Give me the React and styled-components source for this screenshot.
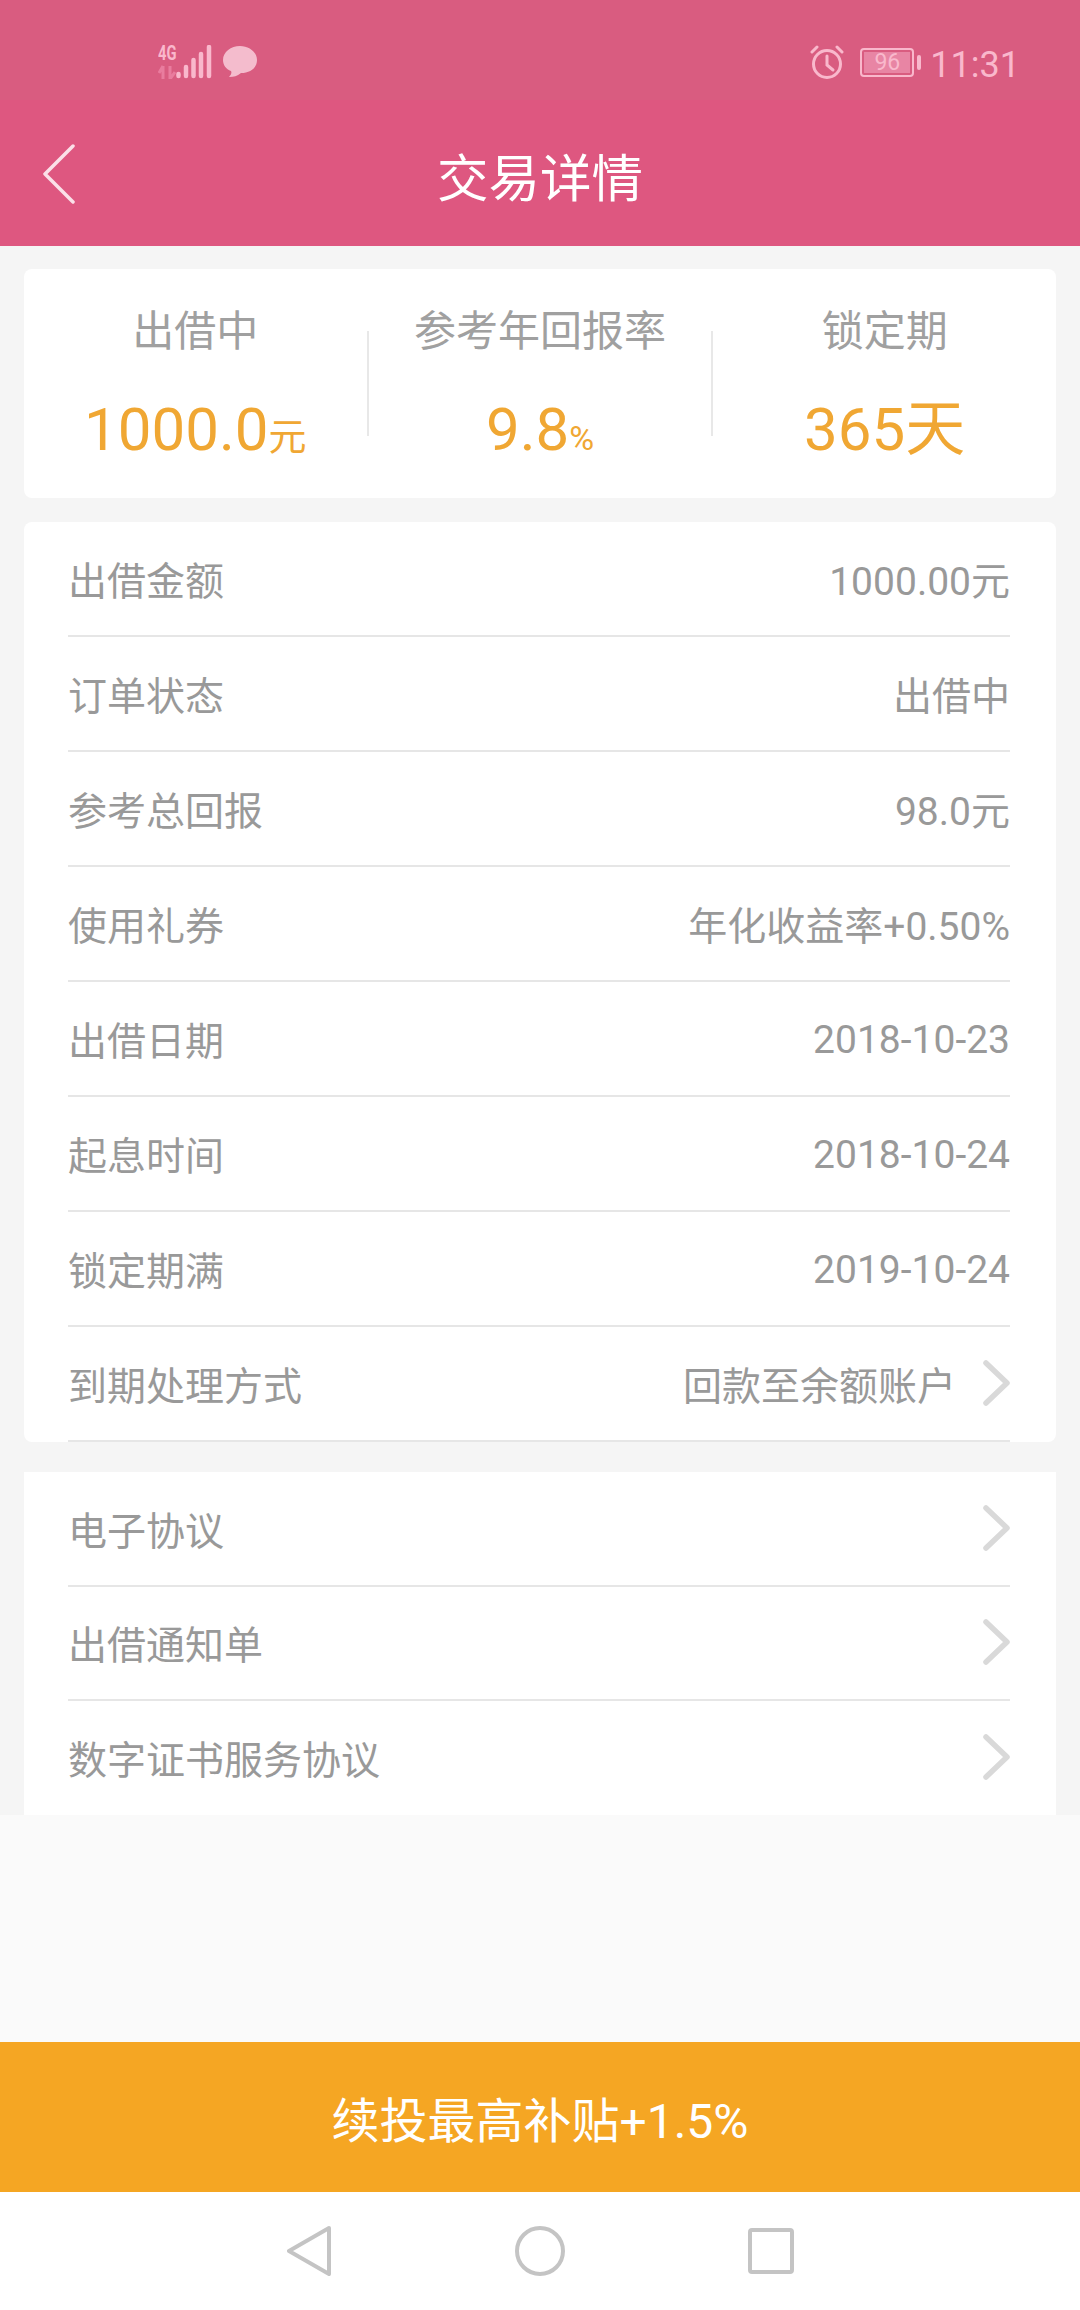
import React from 'react';
import styled, { createGlobalStyle } from 'styled-components';

const Global = createGlobalStyle`
html, body { margin: 0; padding: 0; background: #f5f5f5; }
* { box-sizing: border-box; }
body { font-family: Roboto, "Noto Sans CJK SC", sans-serif; }
`;

const Page = styled.div`
width: 1080px;
height: 2310px;
display: flex;
flex-direction: column;
background: #f5f5f5;
overflow: hidden;
`;

const StatusBar = styled.div`
height: 100px;
padding: 45px 60px 0 158px;
background: #d95c80;
display: flex;
align-items: flex-start;
color: #f9b8cc;
`;

const StatusLeft = styled.div`
display: flex;
flex: 1;
`;

const NetStack = styled.div`
width: 18px;
display: flex;
flex-direction: column;
`;

const NetLabel = styled.div`
height: 20px;
font-size: 21px;
font-weight: 700;
line-height: 16px;
white-space: nowrap;
transform: scaleX(0.7);
transform-origin: left top;
`;

const SignalBars = styled.svg`
display: block;
margin-right: 11px;
`;

const StatusRight = styled.div`
display: flex;
align-items: center;
height: 34px;
`;

const Battery = styled.div`
width: 54px;
height: 29px;
margin-left: 16px;
border: 2px solid #f9b8cc;
border-radius: 4px;
padding: 2px;
position: relative;
&::after {
  content: "";
  position: absolute;
  right: -9px;
  top: 5px;
  width: 4px;
  height: 15px;
  border-radius: 2px;
  background: #f9b8cc;
}
`;

const BatteryFill = styled.div`
height: 100%;
background: #e885a4;
font-size: 23px;
line-height: 21px;
text-align: center;
`;

const Clock = styled.div`
margin: 6px 0 0 16px;
font-size: 36px;
line-height: 34px;
`;

const NavBar = styled.div`
height: 146px;
padding: 2px 43px 0;
background: #de5780;
display: grid;
grid-template-columns: 1fr auto 1fr;
align-items: center;
`;

const Title = styled.h1`
margin: 0;
font-size: 51.5px;
font-weight: 400;
color: #fff;
`;

const Main = styled.div`
padding: 23px 24px 0;
display: flex;
flex-direction: column;
`;

const StatCard = styled.div`
height: 229px;
background: #fff;
border-radius: 8px;
display: flex;
align-items: center;
`;

const Stat = styled.div`
flex: 1;
height: 100%;
display: flex;
flex-direction: column;
align-items: center;
`;

const StatLabel = styled.div`
height: 61px;
margin-top: 33px;
line-height: 60px;
font-size: 42px;
color: #a0a0a0;
`;

const StatValue = styled.div`
margin-top: 32px;
font-size: 60px;
line-height: 70px;
color: #f0a733;
`;

const StatUnit = styled.span`
font-size: ${p => p.$size}px;
`;

const StatDivider = styled.div`
width: 2px;
height: 105px;
background: #e8e8e8;
`;

const Card = styled.div`
margin-top: ${p => p.$top}px;
padding: 0 46px 0 44px;
background: #fff;
border-radius: ${p => p.$radius};
`;

const Row = styled.div`
height: ${p => p.$height || 115}px;
padding-bottom: 2px;
display: flex;
align-items: center;
justify-content: space-between;
border-bottom: ${p => (p.$plain ? 'none' : '2px solid #e6e6e6')};
font-size: 39px;
color: #999;
`;

const DateValue = styled.span`
padding-top: 4px;
`;

const RowValue = styled.div`
display: flex;
align-items: center;
gap: 27px;
`;

const Chevron = styled.svg`
width: 27px;
height: 46px;
display: block;
`;

const Filler = styled.div`
flex: 1;
background: #fafafa;
`;

const ActionButton = styled.div`
height: 150px;
background: #f5a623;
color: #fff;
font-size: 48px;
display: flex;
align-items: center;
justify-content: center;
`;

const SoftKeys = styled.div`
height: 118px;
background: #fff;
display: grid;
grid-template-columns: 45px 50px 46px;
justify-content: center;
column-gap: 183px;
align-items: center;
`;

const details = [
  ['出借金额', '1000.00元'],
  ['订单状态', '出借中'],
  ['参考总回报', '98.0元'],
  ['使用礼券', '年化收益率+0.50%'],
];

const dates = [
  ['出借日期', '2018-10-23'],
  ['起息时间', '2018-10-24'],
  ['锁定期满', '2019-10-24'],
];

const links = ['电子协议', '出借通知单', '数字证书服务协议'];

const RowChevron = () => (
  <Chevron viewBox="0 0 27 46">
    <path d="M3 3 L24 23 L3 43" fill="none" stroke="#d9d9d9" strokeWidth="5.5" strokeLinecap="round" strokeLinejoin="round" />
  </Chevron>
);

const BubbleIcon = () => (
  <svg width="34" height="33" viewBox="0 0 34 33">
    <path d="M17 1 C26 1 34 7 34 15 C34 23 27 28 18 28 C14 31 11 32 6 32 C8 30 9 28 8 26 C3 24 0 20 0 15 C0 7 8 1 17 1 Z" fill="#f4bccd" />
  </svg>
);

const AlarmIcon = () => (
  <svg width="34" height="34" viewBox="0 0 34 34" fill="none" stroke="#f9b8cc" strokeWidth="3">
    <circle cx="17" cy="19" r="13.500" />
    <path d="M17 11 V20 L23 25" strokeLinecap="round" />
    <path d="M2 7 L7 2 M27 2 L32 7" strokeLinecap="round" />
  </svg>
);

const BackIcon = () => (
  <svg width="32" height="60" viewBox="0 0 32 60">
    <path d="M30 2 L2 30 L30 58" fill="none" stroke="#fbe0e8" strokeWidth="3.500" strokeLinecap="round" strokeLinejoin="round" />
  </svg>
);

export default function App() {
  return (
    <Page>
      <Global />
      <StatusBar>
        <StatusLeft>
          <NetStack>
            <NetLabel>4G</NetLabel>
            <svg width="18" height="14" viewBox="0 0 18 14">
              <path d="M5 1 V14 M5 1 L1 8 M12 1 V14 M12 14 L17 7" stroke="#e97c9e" strokeWidth="3" fill="none" />
            </svg>
          </NetStack>
          <SignalBars width="36" height="34" viewBox="0 0 36 34">
            <g stroke="#f9b8cc" strokeWidth="4.500" strokeLinecap="round">
              <path d="M2.500 29 V31" />
              <path d="M10 22 V31" />
              <path d="M17.500 15 V31" />
              <path d="M25 9 V31" />
              <path d="M33 2 V31" />
            </g>
          </SignalBars>
          <BubbleIcon />
        </StatusLeft>
        <StatusRight>
          <AlarmIcon />
          <Battery>
            <BatteryFill>96</BatteryFill>
          </Battery>
          <Clock>11:31</Clock>
        </StatusRight>
      </StatusBar>
      <NavBar>
        <BackIcon />
        <Title>交易详情</Title>
      </NavBar>
      <Main>
        <StatCard>
          <Stat>
            <StatLabel>出借中</StatLabel>
            <StatValue>1000.0<StatUnit $size={38}>元</StatUnit></StatValue>
          </Stat>
          <StatDivider />
          <Stat>
            <StatLabel>参考年回报率</StatLabel>
            <StatValue>9.8<StatUnit $size={34}>%</StatUnit></StatValue>
          </Stat>
          <StatDivider />
          <Stat>
            <StatLabel>锁定期</StatLabel>
            <StatValue>365天</StatValue>
          </Stat>
        </StatCard>
        <Card $top={24} $radius="8px">
          {details.map(([label, value]) => (
            <Row key={label}>
              <span>{label}</span>
              <span>{value}</span>
            </Row>
          ))}
          {dates.map(([label, value]) => (
            <Row key={label}>
              <span>{label}</span>
              <DateValue>{value}</DateValue>
            </Row>
          ))}
          <Row>
            <span>到期处理方式</span>
            <RowValue>
              <span>回款至余额账户</span>
              <RowChevron />
            </RowValue>
          </Row>
        </Card>
        <Card $top={30} $radius="0">
          {links.map((label, i) => (
            <Row key={label} $plain={i === 2} $height={i === 0 ? 115 : 114}>
              <span>{label}</span>
              <RowChevron />
            </Row>
          ))}
        </Card>
      </Main>
      <Filler />
      <ActionButton>续投最高补贴+1.5%</ActionButton>
      <SoftKeys>
        <svg width="45" height="50" viewBox="0 0 45 50">
          <path d="M42 2 L2 25 L42 48 Z" fill="none" stroke="#c4c4c4" strokeWidth="4" strokeLinejoin="round" />
        </svg>
        <svg width="50" height="50" viewBox="0 0 50 50">
          <circle cx="25" cy="25" r="23" fill="none" stroke="#c4c4c4" strokeWidth="4" />
        </svg>
        <svg width="46" height="46" viewBox="0 0 46 46">
          <rect x="2" y="2" width="42" height="42" rx="2" fill="none" stroke="#c4c4c4" strokeWidth="4" />
        </svg>
      </SoftKeys>
    </Page>
  );
}
